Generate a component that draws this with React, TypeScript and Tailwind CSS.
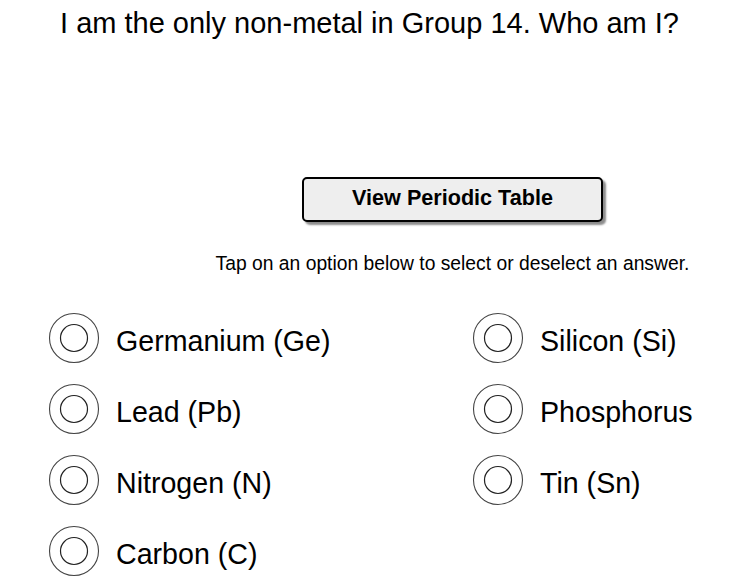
import React from 'react';

const options = [
  'Germanium (Ge)',
  'Silicon (Si)',
  'Lead (Pb)',
  'Phosphorus',
  'Nitrogen (N)',
  'Tin (Sn)',
  'Carbon (C)',
];

const Radio = () => (
  <svg width="52" height="52" viewBox="0 0 52 52" className="shrink-0">
    <circle cx="26" cy="26" r="24.5" fill="white" stroke="#444" strokeWidth="1.1" />
    <circle cx="26" cy="26" r="13.5" fill="white" stroke="#222" strokeWidth="1.2" />
  </svg>
);

export default function App() {
  return (
    <div className="w-[739px] h-[584px] bg-white overflow-hidden font-['Liberation_Sans',Arial,sans-serif] text-black">
      <h1 className="pt-[9px] text-center text-[29px] leading-none font-normal">
        I am the only non-metal in Group 14. Who am I?
      </h1>

      <div className="pl-[166px] mt-[139px] flex flex-col items-center">
        <button className="w-[301px] h-[45px] pb-[4px] rounded-[5px] border-2 border-black bg-[#eeeeee] shadow-[3px_3px_2px_rgba(0,0,0,0.45)] text-[21.6px] font-bold leading-none">
          View Periodic Table
        </button>
        <p className="mt-[32px] text-[19.3px] leading-none">
          Tap on an option below to select or deselect an answer.
        </p>
      </div>

      <div className="mt-[39px] ml-[48px] grid grid-cols-[424px_1fr] gap-y-[19px]">
        {options.map((o) => (
          <div key={o} className="flex items-center h-[52px]">
            <Radio />
            <span className="ml-[16px] pt-[5px] text-[28.6px] leading-none">{o}</span>
          </div>
        ))}
      </div>
    </div>
  );
}
